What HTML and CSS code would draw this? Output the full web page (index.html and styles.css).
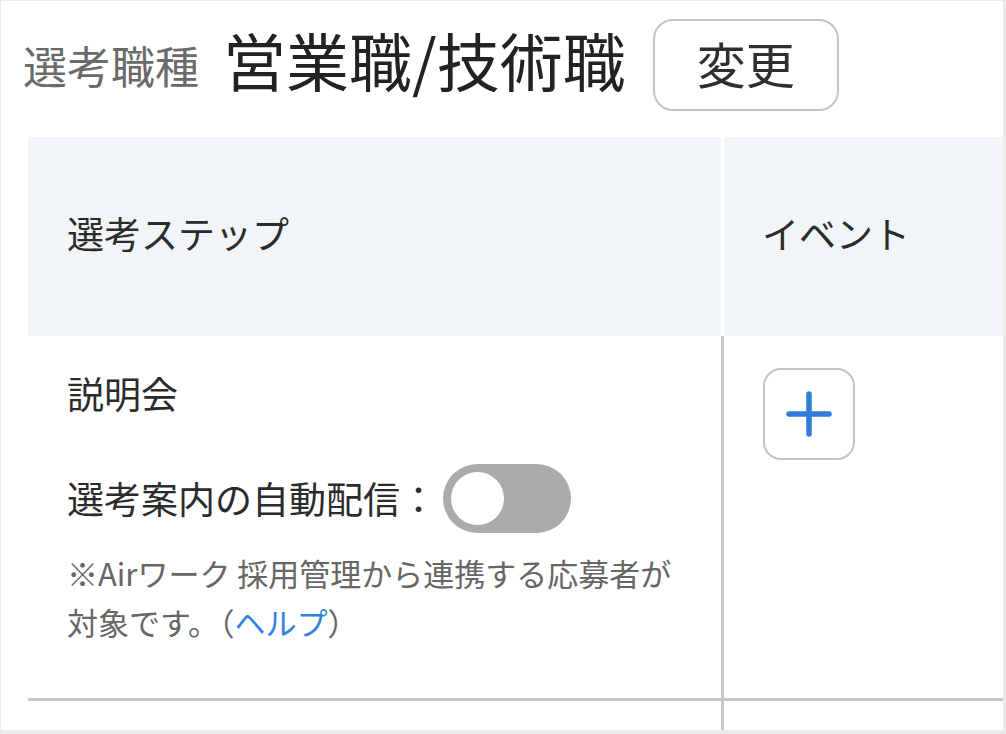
FILE: index.html
```html
<!DOCTYPE html>
<html lang="ja">
<head>
<meta charset="utf-8">
<title>選考職種</title>
<link rel="stylesheet" href="styles.css">
</head>
<body>
<div class="frame">
  <div class="head">
    <span class="label">選考職種</span>
    <span class="title">営業職/技術職</span>
    <button class="btn" type="button">変更</button>
  </div>
  <div class="table">
    <div class="row thead">
      <div class="cell c1"><span class="th th1">選考ステップ</span></div>
      <div class="cell c2"><span class="th th2">イベント</span></div>
    </div>
    <div class="row tbody">
      <div class="cell c1 body1">
        <div class="step-name">説明会</div>
        <div class="auto">
          <span class="auto-label">選考案内の自動配信：</span>
          <span class="toggle"><span class="knob"></span></span>
        </div>
        <p class="note">※Airワーク 採用管理から連携する応募者が<br>対象です。（<a class="help" href="#">ヘルプ</a>）</p>
      </div>
      <div class="cell c2 body2">
        <button class="add" type="button" aria-label="追加">
          <svg width="46" height="46" viewBox="0 0 46 46"><path d="M23 3v40M3 23h40" stroke="#2f7dd9" stroke-width="5.5" stroke-linecap="round" fill="none"/></svg>
        </button>
      </div>
    </div>
    <div class="row tbody last">
      <div class="cell c1 empty"></div>
      <div class="cell c2 empty"></div>
    </div>
  </div>
</div>
</body>
</html>
```
FILE: styles.css
```css
html, body {
  margin: 0;
  padding: 0;
}
body {
  background: #ebebeb;
  font-family: "Noto Sans CJK JP", "Noto Sans", sans-serif;
  color: #2b2b2b;
  width: 1006px;
  height: 734px;
  overflow: hidden;
}
.frame {
  margin: 1px 0 0 1px;
  width: 1002px;
  height: 729px;
  background: #ffffff;
  overflow: hidden;
}
.head {
  display: flex;
  align-items: center;
  height: 92px;
  padding: 18px 0 0 22px;
}
.label {
  font-size: 44px;
  line-height: 60px;
  color: #6a6a6a;
}
.title {
  font-size: 63px;
  line-height: 80px;
  color: #222;
  margin-left: 24px;
  margin-bottom: 12px;
}
.btn {
  margin-left: 27px;
  width: 186px;
  height: 92px;
  border: 2px solid #c4c4c4;
  border-radius: 20px;
  background: #fff;
  font-family: inherit;
  font-size: 49px;
  line-height: 1;
  color: #2e2e2e;
  padding: 0 0 6px;
}
.table {
  margin: 26px 0 0 27px;
  width: 975px;
}
.row {
  display: grid;
  grid-template-columns: 696px 1fr;
}
.cell.c1 {
  border-right: 3px solid #c6c6c6;
}
.thead .cell {
  background: #f2f5f8;
  height: 199px;
  display: flex;
  align-items: center;
}
.thead .cell.c1 {
  border-right-color: #ffffff;
}
.th {
  font-size: 37px;
  line-height: 50px;
  color: #2b2b2b;
  margin-bottom: 8px;
}
.th1 { margin-left: 39px; }
.th2 { margin-left: 38px; }
.tbody {
  border-bottom: 3px solid #c6c6c6;
}
.body1 {
  padding: 30px 20px 52px 39px;
}
.step-name {
  font-size: 37px;
  line-height: 55px;
  color: #2b2b2b;
}
.auto {
  display: flex;
  align-items: center;
  margin-top: 43px;
  height: 69px;
}
.auto-label {
  font-size: 37px;
  line-height: 55px;
  color: #2b2b2b;
}
.toggle {
  margin-left: 6px;
  width: 128px;
  height: 69px;
  border-radius: 35px;
  background: #ababab;
  display: flex;
  align-items: center;
  padding-left: 8px;
  box-sizing: border-box;
}
.knob {
  width: 53px;
  height: 53px;
  border-radius: 50%;
  background: #fff;
}
.note {
  margin: 15px 0 0;
  font-size: 31px;
  line-height: 49px;
  color: #666;
}
.help {
  color: #3182df;
  text-decoration: none;
}
.body2 {
  padding: 32px 0 0 39px;
}
.add {
  width: 92px;
  height: 92px;
  border: 2px solid #c4c4c4;
  border-radius: 18px;
  background: #fff;
  padding: 0;
  display: flex;
  align-items: center;
  justify-content: center;
}
.add svg { display: block; }
.last {
  border-bottom: none;
}
.empty {
  height: 40px;
}
```
